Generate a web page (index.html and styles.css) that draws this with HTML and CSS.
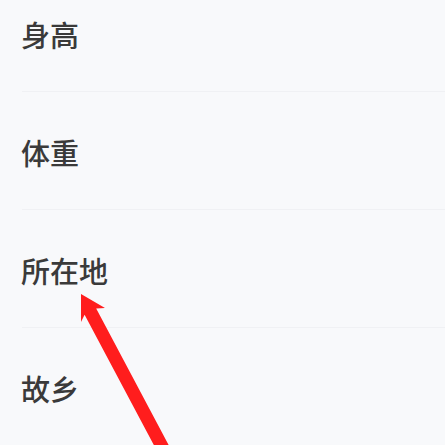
FILE: index.html
```html
<html lang="zh-CN">
<head>
    <meta charset="UTF-8">
    <meta name="viewport" content="width=device-width, initial-scale=1.0">
    <title>个人资料</title>
    <link rel="stylesheet" href="styles.css">
</head>
<body>
    <div class="profile">
        <!-- Profile rows -->
        <div class="list">
            <div class="row"><span class="label">身高</span></div>
            <div class="row"><span class="label">体重</span></div>
            <div class="row"><span class="label">所在地</span></div>
            <div class="row"><span class="label">故乡</span></div>
        </div>

        <!-- Annotation arrow -->
        <svg class="arrow" width="445" height="445" viewBox="0 0 445 445">
            <polygon points="81,294 105,308 96.2,308.6 175,457 163.4,463 84.6,314.8 81,322" fill="#ff1d1d"/>
        </svg>
    </div>
</body>
</html>
```

FILE: styles.css
```css
body {
    margin: 0;
    background-color: #f8f9fb;
    font-family: "Noto Sans CJK SC", "Noto Sans", sans-serif;
    overflow: hidden;
}
.profile {
    position: relative;
    width: 445px;
    height: 445px;
    overflow: hidden;
}
.list {
    margin-top: -26px;
}
.row {
    margin-left: 22px;
    padding: 40px 0 37px 0;
    border-bottom: 1px solid #f0f1f4;
}
.label {
    display: block;
    font-size: 29px;
    font-weight: 500;
    line-height: 40px;
    color: #3a3a3a;
    margin-left: -1px;
}
.arrow {
    position: absolute;
    left: 0;
    top: 0;
}
```
